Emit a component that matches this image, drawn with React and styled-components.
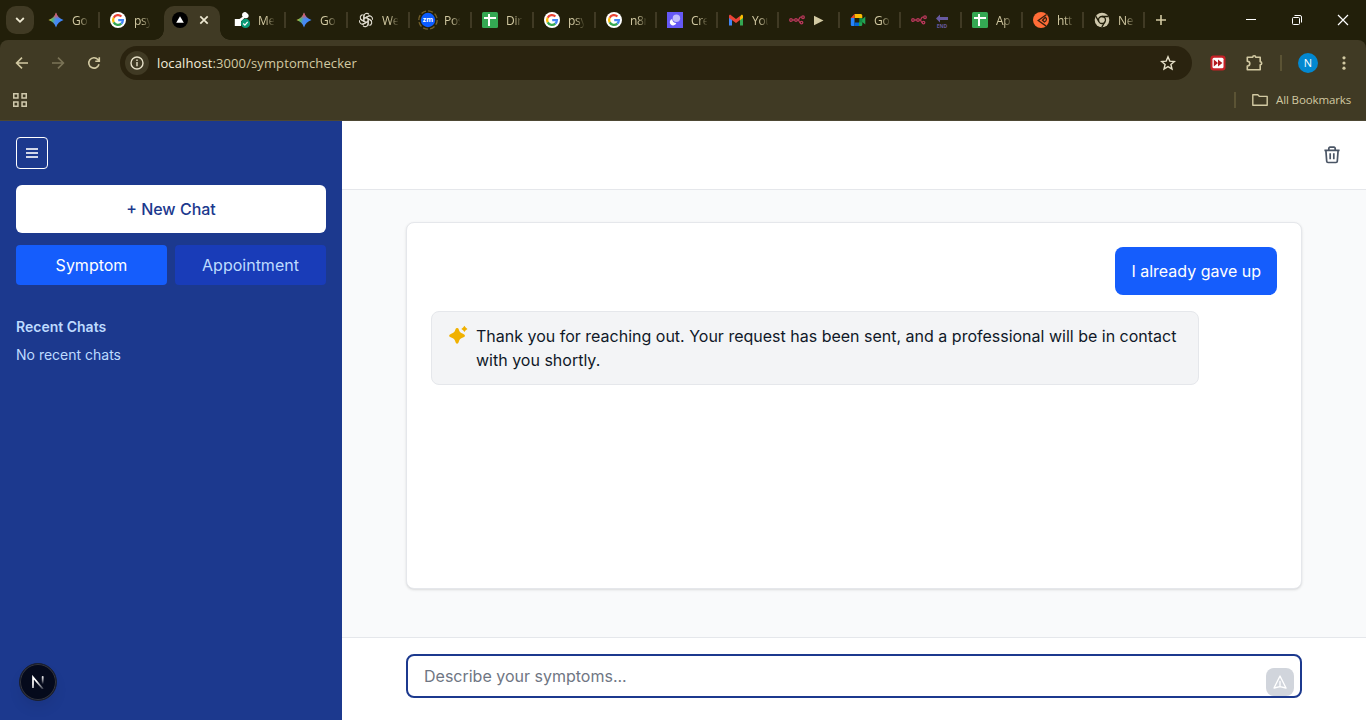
import React from 'react';
import styled, { createGlobalStyle, css } from 'styled-components';

const GlobalStyle = createGlobalStyle`
  *, *::before, *::after { box-sizing: border-box; }
  html, body { margin: 0; padding: 0; overflow: hidden; }
  body { font-family: Inter, "Liberation Sans", sans-serif; font-size: 16px; line-height: 24px; }
  button, input { font: inherit; border: 0; padding: 0; margin: 0; background: none; color: inherit; }
  svg { display: block; flex: none; }
`;

const Screen = styled.div`
  width: 1366px;
  height: 720px;
  display: flex;
  flex-direction: column;
  overflow: hidden;
`;

/* ---------- Browser frame ---------- */

const Browser = styled.header`
  height: 121px;
  flex: none;
  display: flex;
  flex-direction: column;
  background: #221f0a;
  color: #d2c9a2;
  font-family: "Open Sans", "Noto Sans", sans-serif;
`;

const TabStrip = styled.div`
  height: 40px;
  display: flex;
  align-items: center;
  padding-left: 6px;
`;

const TabSearch = styled.button`
  width: 28px;
  height: 28px;
  margin-right: 4px;
  border-radius: 10px;
  background: #403a24;
  color: #eee9d2;
  display: grid;
  place-items: center;
`;

const Tab = styled.div`
  width: ${(p) => p.$width}px;
  height: 40px;
  flex: none;
  display: flex;
  align-items: center;
  padding-left: 10px;
  ${(p) =>
    p.$divider &&
    css`
      &::after {
        content: '';
        width: 2px;
        height: 16px;
        margin-left: auto;
        background: #403a24;
      }
    `}
`;

const TabTitle = styled.span`
  width: 17px;
  margin-left: 7px;
  padding: 1px 0 0 1px;
  overflow: hidden;
  white-space: nowrap;
  font-size: 12px;
  letter-spacing: -0.3px;
  line-height: 18px;
  mask-image: linear-gradient(90deg, #000 50%, transparent 105%);
`;

const ActiveTabCell = styled.div`
  width: 62px;
  height: 40px;
  flex: none;
  display: flex;
  align-items: flex-end;
  padding-left: 2px;
`;

const ActiveTab = styled.div`
  position: relative;
  width: 56px;
  height: 34px;
  border-radius: 10px 10px 0 0;
  background: #403a24;
  color: #eee9d2;
  display: flex;
  align-items: center;
  gap: 8px;
  padding: 0 0 6px 8px;
  &::before,
  &::after {
    content: '';
    position: absolute;
    bottom: 0;
    width: 10px;
    height: 10px;
  }
  &::before {
    left: -10px;
    background: radial-gradient(circle at 0 0, transparent 9.5px, #403a24 10px);
  }
  &::after {
    right: -10px;
    background: radial-gradient(circle at 100% 0, transparent 9.5px, #403a24 10px);
  }
`;

const NewTab = styled.button`
  width: 32px;
  height: 28px;
  display: grid;
  place-items: center;
`;

const WindowControls = styled.div`
  margin-left: auto;
  display: flex;
  color: #fff;
`;

const WindowButton = styled.button`
  width: 46px;
  height: 40px;
  display: grid;
  place-items: center;
`;

const ToolbarArea = styled.div`
  height: 81px;
  border-radius: 8px 8px 0 0;
  background: #403a24;
  border-bottom: 1px solid #4d4733;
`;

const Toolbar = styled.div`
  height: 46px;
  display: flex;
  align-items: center;
  padding-left: 4px;
`;

const ToolButton = styled.button`
  width: 36px;
  height: 36px;
  flex: none;
  display: grid;
  place-items: center;
  opacity: ${(p) => (p.$dim ? 0.4 : 1)};
`;

const AddressBar = styled.div`
  width: 1072px;
  height: 34px;
  margin-left: 8px;
  margin-right: 8px;
  padding: 0 16px 0 5px;
  border-radius: 17px;
  background: #2a230f;
  display: flex;
  align-items: center;
  color: #e6e0c8;
`;

const SiteInfo = styled.span`
  width: 24px;
  height: 24px;
  border-radius: 50%;
  background: #403a24;
  display: grid;
  place-items: center;
`;

const Url = styled.span`
  flex: 1;
  margin-left: 8px;
  font-size: 13px;
  letter-spacing: 0.11px;
  line-height: 20px;
  color: #d2c9a2;
  b { font-weight: 400; color: #f3eedb; }
`;

const Divider = styled.span`
  width: 2px;
  height: 16px;
  flex: none;
  background: #5b5334;
`;

const Avatar = styled.span`
  width: 20px;
  height: 20px;
  border-radius: 50%;
  background: #0288d1;
  color: #fff;
  font-size: 11px;
  line-height: 20px;
  text-align: center;
`;

const Bookmarks = styled.div`
  height: 28px;
  display: flex;
  align-items: center;
  padding: 0 15px 0 13px;
`;

const AllBookmarks = styled.div`
  margin-left: auto;
  display: flex;
  align-items: center;
  font-size: 11.5px;
  letter-spacing: -0.13px;
  line-height: 18px;
  svg { margin: 0 8px 0 16px; }
`;

const ToolbarTail = styled.div`
  display: flex;
  align-items: center;
  padding-left: 8px;
  gap: 16px;
`;

/* ---------- Application ---------- */

const Page = styled.div`
  flex: 1;
  min-height: 0;
  display: flex;
`;

const Sidebar = styled.aside`
  position: relative;
  width: 342px;
  flex: none;
  padding: 16px;
  background: #1c398e;
  color: #bedbff;
`;

const MenuButton = styled.button`
  width: 32px;
  height: 32px;
  border: 1px solid #fff;
  border-radius: 4px;
  color: #fff;
  display: grid;
  place-items: center;
`;

const NewChat = styled.button`
  display: block;
  width: 100%;
  height: 48px;
  margin-top: 16px;
  border-radius: 6px;
  background: #fff;
  color: #1c398e;
  font-weight: 500;
`;

const Modes = styled.div`
  display: grid;
  grid-template-columns: 1fr 1fr;
  gap: 8px;
  margin-top: 12px;
`;

const Mode = styled.button`
  height: 40px;
  border-radius: 4px;
  background: ${(p) => (p.$active ? '#155dfc' : '#193cb8')};
  color: ${(p) => (p.$active ? '#fff' : '#bedbff')};
`;

const RecentTitle = styled.h3`
  margin: 32px 0 8px;
  font-size: 14px;
  line-height: 20px;
  font-weight: 600;
`;

const RecentEmpty = styled.p`
  margin: 0;
  font-size: 14px;
  line-height: 20px;
`;

const DevBadge = styled.div`
  position: absolute;
  left: 19px;
  bottom: 19px;
  width: 38px;
  height: 38px;
  border-radius: 50%;
  background: #050a1c;
  border: 1px solid #1b2030;
  box-shadow: inset 0 0 0 1px #34363f, 0 8px 16px -4px rgba(0, 0, 0, 0.12);
  display: grid;
  place-items: center;
`;

const Main = styled.main`
  flex: 1;
  display: flex;
  flex-direction: column;
  background: #f9fafb;
`;

const ChatHeader = styled.div`
  height: 69px;
  padding-right: 24px;
  background: #fff;
  border-bottom: 1px solid #e5e7eb;
  display: flex;
  align-items: center;
  justify-content: flex-end;
  color: #4a5565;
`;

const ChatArea = styled.section`
  flex: 1;
  padding: 32px 64px 48px;
  display: flex;
`;

const ChatCard = styled.div`
  flex: 1;
  padding: 24px;
  background: #fff;
  border: 1px solid #e5e7eb;
  border-radius: 8px;
  box-shadow: 0 1px 3px rgba(0, 0, 0, 0.1), 0 1px 2px -1px rgba(0, 0, 0, 0.1);
  display: flex;
  flex-direction: column;
  gap: 16px;
`;

const UserMessage = styled.div`
  align-self: flex-end;
  padding: 12px 16px;
  border-radius: 8px;
  background: #155dfc;
  color: #fff;
`;

const BotMessage = styled.div`
  width: 768px;
  padding: 12px 16px;
  border: 1px solid #e5e7eb;
  border-radius: 8px;
  background: #f3f4f6;
  color: #101828;
  display: flex;
  gap: 8px;
`;

const Composer = styled.footer`
  height: 83px;
  padding: 16px 64px 22px;
  background: #fff;
  border-top: 1px solid #e5e7eb;
`;

const InputFrame = styled.div`
  height: 44px;
  padding: 0 6px 0 16px;
  border: 2px solid #1c398e;
  border-radius: 8px;
  display: flex;
  align-items: center;
`;

const ChatInput = styled.input`
  flex: 1;
  height: 24px;
  outline: 0;
  &::placeholder { color: #6f7683; opacity: 1; }
`;

const SendButton = styled.button`
  width: 28px;
  height: 28px;
  align-self: flex-end;
  border-radius: 8px;
  background: #d1d5dc;
  color: #fff;
  display: grid;
  place-items: center;
`;

/* ---------- Favicons ---------- */

const Fav = ({ children, box = '0 0 16 16' }) => (
  <svg width="16" height="16" viewBox={box} fill="none">{children}</svg>
);

const Gemini = ({ id }) => (
  <Fav>
    <defs>
      <linearGradient id={id} x1="1" y1="5" x2="15" y2="9" gradientUnits="userSpaceOnUse">
        <stop offset="0" stopColor="#f2c32c" />
        <stop offset=".28" stopColor="#54b670" />
        <stop offset=".5" stopColor="#4a8af0" />
        <stop offset="1" stopColor="#3986ff" />
      </linearGradient>
      <linearGradient id={`${id}t`} x1="8" y1="0" x2="8" y2="7" gradientUnits="userSpaceOnUse">
        <stop offset="0" stopColor="#f04b45" />
        <stop offset=".5" stopColor="#ee4d5d" stopOpacity=".8" />
        <stop offset="1" stopColor="#ee4d5d" stopOpacity="0" />
      </linearGradient>
    </defs>
    {[id, `${id}t`].map((g) => (
      <path key={g} fill={`url(#${g})`} d="M8 .5C9.300 4.400 11.600 6.700 15.500 8 11.600 9.300 9.300 11.600 8 15.500 6.700 11.600 4.400 9.300 .5 8 4.400 6.700 6.700 4.400 8 .5z" />
    ))}
  </Fav>
);

const Google = () => (
  <Fav>
    <circle cx="8" cy="8" r="8" fill="#fff" />
    <g strokeWidth="2.300">
      <path d="M11.400 4.500A4.900 4.900 0 0 0 3.700 5.700" stroke="#ea4335" />
      <path d="M3.700 5.700a4.900 4.900 0 0 0 0 4.700" stroke="#fbbc05" />
      <path d="M3.700 10.400a4.900 4.900 0 0 0 7.600 1.200" stroke="#34a853" />
      <path d="M11.300 11.600A4.900 4.900 0 0 0 12.900 8.200H8.200" stroke="#4285f4" />
    </g>
  </Fav>
);

const Sheets = () => (
  <Fav>
    <rect width="16" height="16" rx="1.500" fill="#34a853" />
    <path d="M7 2v12M2 6h12" stroke="#fff" strokeWidth="2" />
  </Fav>
);

const Linked = () => (
  <Fav>
    <path d="M.8 7h4.700l3.200-2.200A3 3 0 0 1 8 3a2.800 2.800 0 0 1 5-1.800A2.800 2.800 0 0 1 14 5.500c-1 1-2.500.8-3.500.5L7 9.500V14H.8z" fill="#fff" />
    <circle cx="11.500" cy="11.400" r="4.600" fill="#0b9a78" />
    <path d="M9.300 11.500l1.600 1.600 2.800-3.200" stroke="#fff" strokeWidth="1.300" />
  </Fav>
);

const OpenAi = () => (
  <Fav>
    <g stroke="#ddd9cd" strokeWidth="1.150" strokeLinejoin="round">
      {[0, 60, 120, 180, 240, 300].map((a) => (
        <path key={a} transform={`rotate(${a} 8 8)`} d="M5.900 9.200V4.300a2.900 2.900 0 0 1 5.100-1.900M5.900 6.600l4.200-2.400a2.900 2.900 0 0 1 1.900-.4" />
      ))}
    </g>
  </Fav>
);

const ZoomRing = styled.span`
  width: 20px;
  margin: 0 -2px;
  flex: none;
`;

const ZoomLogo = () => (
  <ZoomRing>
    <svg width="20" height="20" viewBox="0 0 20 20" fill="none">
      <circle cx="10" cy="10" r="9.200" stroke="#76622b" strokeWidth="1.300" strokeDasharray="5 2.200" />
      <circle cx="10" cy="10" r="7.200" fill="#0b5cff" />
      <text x="10" y="12.200" fontSize="7" fontWeight="700" fontFamily="Open Sans" textAnchor="middle" fill="#fff">zm</text>
    </svg>
  </ZoomRing>
);

const Purple = () => (
  <Fav>
    <path fill="#6558f5" d="M0 0h16v16H0z" />
    <circle cx="9.400" cy="6.300" r="3.700" fill="#c1bcfb" />
    <path d="M5.200 6.900a3.300 3.300 0 1 0 4.100 4.100A4.600 4.600 0 0 1 5.200 6.900z" fill="#fff" />
  </Fav>
);

const Gmail = () => (
  <Fav>
    <path d="M1 4v9.500h3V6z" fill="#4285f4" />
    <path d="M15 4v9.500h-3V6z" fill="#34a853" />
    <path d="M12 4.500l1-1.300c.8-.8 2-.2 2 .8v2l-3 2.300z" fill="#fbbc04" />
    <path d="M1 6V4c0-1 1.200-1.600 2-.8l5 3.900 4-3v3.900L8 11z" fill="#ea4335" />
  </Fav>
);

const N8n = () => (
  <Fav>
    <g stroke="#b8375a" strokeWidth="1.300">
      <circle cx="2" cy="8" r="1.300" />
      <circle cx="7" cy="8" r="1.300" />
      <circle cx="14" cy="5.200" r="1.300" />
      <circle cx="12.500" cy="10.600" r="1.300" />
      <path d="M3.300 8h2.400M8.300 8h.7c1.400 0 1-2.800 2.600-2.800h1.100M9 8c1.400 0 1 2.600 2.200 2.600" />
    </g>
  </Fav>
);

const Meet = () => (
  <Fav>
    <path d="M4.500 2h6.300A1.500 1.500 0 0 1 12.300 3.500V6H4.500z" fill="#fbbc04" />
    <path d="M4.500 2v4H.8z" fill="#ea4335" />
    <path d="M.8 6h3.700v8H2a1.200 1.200 0 0 1-1.200-1.200z" fill="#2684fc" />
    <path d="M4.500 10.500H9V14H4.500z" fill="#0066da" />
    <path d="M9 14v-3.500L12.300 6v1.200L15.300 4.500v8L12.300 10v2.500a1.500 1.500 0 0 1-1.500 1.500z" fill="#21a453" />
    <path d="M9.300 6h3v4.500h-3z" fill="#138a43" />
  </Fav>
);

const Postman = () => (
  <Fav>
    <circle cx="8" cy="8" r="8" fill="#ff6c37" />
    <path d="M13.600 2.500L5.200 8.500l8 5.600M12.300 5.200c1.800 1 1.500 3.600-.8 4.800L9.500 8.200z" stroke="#35200f" strokeWidth="1.300" />
  </Fav>
);

const Chrome = () => (
  <Fav>
    <circle cx="8" cy="8" r="7.300" fill="#cfc8ac" />
    <circle cx="8" cy="8" r="3.500" stroke="#221f0a" strokeWidth="1.300" />
    <path d="M8 4.500h6.500M4.900 9.700L1.700 4.200M11 9.700l-3.200 5.500" stroke="#221f0a" strokeWidth="1.300" />
  </Fav>
);

const EndArrow = () => (
  <svg width="14" height="14" viewBox="0 0 14 14">
    <path d="M0 4.500l4-4V3h8v3H4v2.500z" fill="#675aa0" />
    <text x="6" y="13.500" fontSize="5" fontWeight="700" fontFamily="Open Sans" textAnchor="middle" fill="#675aa0">END</text>
  </svg>
);

const PlayGlyph = () => (
  <svg width="14" height="14" viewBox="0 0 14 14"><path d="M0 1.800v9.400L9.500 6.500z" fill="#d2c9a2" /></svg>
);

const tabsBefore = [
  { icon: <Gemini id="g1" />, title: 'Go', width: 62, divider: true },
  { icon: <Google />, title: 'psy', width: 62 },
];

const tabsAfter = [
  { icon: <Linked />, title: 'Me', width: 62 },
  { icon: <Gemini id="g2" />, title: 'Go', width: 62 },
  { icon: <OpenAi />, title: 'We', width: 62 },
  { icon: <ZoomLogo />, title: 'Pos', width: 62 },
  { icon: <Sheets />, title: 'Dir', width: 62 },
  { icon: <Google />, title: 'psy', width: 62 },
  { icon: <Google />, title: 'n8n', width: 61 },
  { icon: <Purple />, title: 'Cre', width: 61 },
  { icon: <Gmail />, title: 'You', width: 61 },
  { icon: <N8n />, glyph: <PlayGlyph />, width: 61 },
  { icon: <Meet />, title: 'Go', width: 61 },
  { icon: <N8n />, glyph: <EndArrow />, width: 61 },
  { icon: <Sheets />, title: 'Ap', width: 61 },
  { icon: <Postman />, title: 'htt', width: 61 },
  { icon: <Chrome />, title: 'Ne', width: 61 },
];

const GlyphSlot = styled.span`
  margin: 2px 0 0 9px;
`;

const BrowserTab = ({ icon, title, glyph, width, divider = true }) => (
  <Tab $width={width} $divider={divider}>
    {icon}
    {glyph ? <GlyphSlot>{glyph}</GlyphSlot> : <TabTitle>{title}</TabTitle>}
  </Tab>
);

const Line = ({ size = 16, width = 1.6, d, children }) => (
  <svg width={size} height={size} viewBox="0 0 16 16" fill="none" stroke="currentColor" strokeWidth={width}>
    {d && <path d={d} />}
    {children}
  </svg>
);

function BrowserFrame() {
  return (
    <Browser>
      <TabStrip>
        <TabSearch><Line width={1.800} d="M4.200 6L8 9.800 11.800 6" /></TabSearch>
        {tabsBefore.map((t, i) => <BrowserTab key={i} {...t} divider={Boolean(t.divider)} />)}
        <ActiveTabCell>
          <ActiveTab>
            <Fav>
              <circle cx="8" cy="8" r="8" fill="#000" />
              <path d="M8 4.300l3.800 6.500H4.200z" fill="#fff" />
            </Fav>
            <Line width={1.700} d="M4.300 4.300l7.400 7.400M11.700 4.300l-7.400 7.400" />
          </ActiveTab>
        </ActiveTabCell>
        {tabsAfter.map((t, i) => <BrowserTab key={i} {...t} />)}
        <NewTab><Line width={1.600} d="M8 3v10M3 8h10" /></NewTab>
        <WindowControls>
          <WindowButton><Line width={1} d="M3 7.500h10" /></WindowButton>
          <WindowButton>
            <Line width={1}>
              <rect x="3.500" y="5.500" width="7" height="7" rx="1" />
              <path d="M5.500 3.500H11A1.500 1.500 0 0 1 12.500 5v5.500" />
            </Line>
          </WindowButton>
          <WindowButton><Line width={1.200} d="M3 3l10 10M13 3L3 13" /></WindowButton>
        </WindowControls>
      </TabStrip>
      <ToolbarArea>
        <Toolbar>
          <ToolButton><Line d="M14 8H2.800M8 2.600L2.600 8 8 13.400" /></ToolButton>
          <ToolButton $dim><Line d="M2 8h11.200M8 2.600L13.400 8 8 13.400" /></ToolButton>
          <ToolButton><Line d="M13 9.300A5.200 5.200 0 1 1 11.900 4.500L13.200 6M13.300 2.200v4H9.300" /></ToolButton>
          <AddressBar>
            <SiteInfo>
              <Line width={1.400}>
                <circle cx="8" cy="8" r="6" />
                <path d="M8 7v4.200M8 4.600v1.500" />
              </Line>
            </SiteInfo>
            <Url><b>localhost</b>:3000/symptomchecker</Url>
            <Line width={1.400} d="M8 1.800l1.800 4.300 4.600.4-3.500 3 1.100 4.500L8 11.600 4 14l1.100-4.500-3.500-3 4.600-.4z" />
          </AddressBar>
          <ToolButton>
            <svg width="16" height="16" viewBox="0 0 16 16">
              <rect x=".5" y=".5" width="15" height="15" rx="3" fill="#c62127" />
              <rect x="2.500" y="2.700" width="11" height="10.600" rx="1.500" fill="#fff" />
              <path d="M3.800 4.500L8 8l-4.200 3.500zM8 4.500L12.400 8 8 11.500z" fill="#b3191f" />
            </svg>
          </ToolButton>
          <ToolButton>
            <svg width="20" height="18" viewBox="-1 0 20 18" fill="none" stroke="currentColor" strokeWidth="1.600" strokeLinejoin="round">
              <path d="M2.300 3.300h5.400a1.500 1.500 0 0 1 3 0h4.500v4.500a1.500 1.500 0 0 1 0 3v5H2.300v-3.700c1.400 0 2.500-1 2.500-2.500S3.700 7.200 2.300 7.200z" />
            </svg>
          </ToolButton>
          <ToolbarTail>
            <Divider />
            <Avatar>N</Avatar>
            <svg width="16" height="16" viewBox="-2 0 16 16" fill="currentColor">
              <circle cx="8" cy="2.800" r="1.600" /><circle cx="8" cy="8" r="1.600" /><circle cx="8" cy="13.200" r="1.600" />
            </svg>
          </ToolbarTail>
        </Toolbar>
        <Bookmarks>
          <svg width="14" height="14" viewBox="0 0 14 14" fill="none" stroke="#d0c9ac" strokeWidth="1.500">
            <path d="M.75.75h4.200v4.200H.75zM9.050.75h4.200v4.200h-4.200zM.75 9.050h4.200v4.200H.75zM9.050 9.050h4.200v4.200h-4.200z" />
          </svg>
          <AllBookmarks>
            <Divider />
            <svg width="16" height="14" viewBox="0 0 16 14" fill="none" stroke="currentColor" strokeWidth="1.400" strokeLinejoin="round">
              <path d="M.8 1.700h5l1.700 1.700h7.700v8.900H.8z" />
            </svg>
            All Bookmarks
          </AllBookmarks>
        </Bookmarks>
      </ToolbarArea>
    </Browser>
  );
}

/* ---------- Application icons ---------- */

const BarsIcon = () => (
  <svg width="12" height="12" viewBox="0 0 12 12" fill="none" stroke="currentColor" strokeOpacity=".8" strokeWidth="2" shapeRendering="crispEdges">
    <path d="M0 2h12M0 6h12M0 10h12" />
  </svg>
);

const TrashIcon = () => (
  <svg width="20" height="20" viewBox="0 0 20 20" fill="none" stroke="currentColor" strokeWidth="1.700" strokeLinejoin="round">
    <path d="M2.400 5.400h15.200M6.800 5.200V3.400a1.200 1.200 0 0 1 1.200-1.200h4a1.200 1.200 0 0 1 1.200 1.200v1.800M3.900 5.600l.8 10.700a1.300 1.300 0 0 0 1.300 1.200h8a1.300 1.300 0 0 0 1.300-1.200l.8-10.700M8.200 8.300v6M11.800 8.300v6" />
  </svg>
);

const SparkleIcon = () => (
  <svg width="20" height="24" viewBox="0 0 20 24" fill="#f0b100">
    <path d="M9.100 4.100q1.300 0 1.700 1.400c.9 2.600 1.600 3.300 4.200 4.200q2 .8 2 2t-2 1.900c-2.600.9-3.300 1.600-4.200 4.200-.6 2.600-2.800 2.600-3.400 0-.9-2.600-1.600-3.300-4.200-4.200q-2.100-.8-2.100-1.900t2.100-2c2.600-.9 3.300-1.600 4.200-4.200q.4-1.400 1.700-1.400z" />
    <path d="M16.400 1.800q1 2.100 3.100 3.100-2.100 1-3.100 3.100-1-2.100-3.100-3.100 2.100-1 3.100-3.100z" />
  </svg>
);

const SendIcon = () => (
  <svg width="16" height="16" viewBox="0 0 24 24" fill="none" stroke="currentColor" strokeWidth="2" strokeLinecap="round" strokeLinejoin="round">
    <path d="M12 19l9 2-9-18-9 18 9-2zm0 0v-8" />
  </svg>
);

const DevLogo = () => (
  <svg width="14" height="14" viewBox="0 0 14 14" fill="none" strokeWidth="1.700">
    <defs>
      <linearGradient id="stem" x1="0" y1="1" x2="0" y2="9" gradientUnits="userSpaceOnUse">
        <stop stopColor="#fff" /><stop offset="1" stopColor="#fff" stopOpacity="0" />
      </linearGradient>
      <linearGradient id="slash" x1="6" y1="6" x2="12" y2="14" gradientUnits="userSpaceOnUse">
        <stop stopColor="#fff" /><stop offset="1" stopColor="#fff" stopOpacity=".2" />
      </linearGradient>
    </defs>
    <path d="M2 13V2.200L12 14" stroke="url(#slash)" />
    <path d="M11.200 1.500h1V9h-1z" fill="url(#stem)" stroke="url(#stem)" strokeWidth=".7" />
  </svg>
);

export default function App() {
  return (
    <Screen>
      <GlobalStyle />
      <BrowserFrame />
      <Page>
        <Sidebar>
          <MenuButton aria-label="Toggle menu"><BarsIcon /></MenuButton>
          <NewChat>+ New Chat</NewChat>
          <Modes>
            <Mode $active>Symptom</Mode>
            <Mode>Appointment</Mode>
          </Modes>
          <RecentTitle>Recent Chats</RecentTitle>
          <RecentEmpty>No recent chats</RecentEmpty>
          <DevBadge><DevLogo /></DevBadge>
        </Sidebar>
        <Main>
          <ChatHeader><TrashIcon /></ChatHeader>
          <ChatArea>
            <ChatCard>
              <UserMessage>I already gave up</UserMessage>
              <BotMessage>
                <SparkleIcon />
                <span>Thank you for reaching out. Your request has been sent, and a professional will be in contact with you shortly.</span>
              </BotMessage>
            </ChatCard>
          </ChatArea>
          <Composer>
            <InputFrame>
              <ChatInput placeholder="Describe your symptoms..." />
              <SendButton aria-label="Send"><SendIcon /></SendButton>
            </InputFrame>
          </Composer>
        </Main>
      </Page>
    </Screen>
  );
}
